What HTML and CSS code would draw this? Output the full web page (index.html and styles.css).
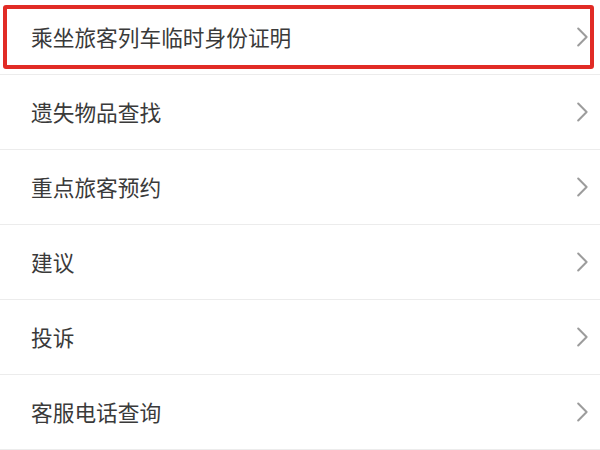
FILE: index.html
```html
<!DOCTYPE html>
<html lang="zh-CN">
<head>
<meta charset="utf-8">
<title>服务列表</title>
<link rel="stylesheet" href="styles.css">
</head>
<body>
<ul class="menu">
  <li class="item item-active"><span class="label">乘坐旅客列车临时身份证明</span><svg class="chev" viewBox="0 0 11 20" width="11" height="20"><path d="M1.2 1.5 L9.6 10 L1.2 18.5" /></svg></li>
  <li class="item"><span class="label">遗失物品查找</span><svg class="chev" viewBox="0 0 11 20" width="11" height="20"><path d="M1.2 1.5 L9.6 10 L1.2 18.5" /></svg></li>
  <li class="item"><span class="label">重点旅客预约</span><svg class="chev" viewBox="0 0 11 20" width="11" height="20"><path d="M1.2 1.5 L9.6 10 L1.2 18.5" /></svg></li>
  <li class="item"><span class="label">建议</span><svg class="chev" viewBox="0 0 11 20" width="11" height="20"><path d="M1.2 1.5 L9.6 10 L1.2 18.5" /></svg></li>
  <li class="item"><span class="label">投诉</span><svg class="chev" viewBox="0 0 11 20" width="11" height="20"><path d="M1.2 1.5 L9.6 10 L1.2 18.5" /></svg></li>
  <li class="item"><span class="label">客服电话查询</span><svg class="chev" viewBox="0 0 11 20" width="11" height="20"><path d="M1.2 1.5 L9.6 10 L1.2 18.5" /></svg></li>
</ul>
</body>
</html>
```
FILE: styles.css
```css
html, body {
  margin: 0;
  padding: 0;
  background: #ffffff;
}
body {
  font-family: "Noto Sans CJK SC", "Noto Sans", sans-serif;
  width: 600px;
  height: 450px;
  overflow: hidden;
}
.menu {
  list-style: none;
  margin: 0;
  padding: 0;
}
.item {
  position: relative;
  height: 74px;
  border-bottom: 1px solid #ececec;
  display: flex;
  align-items: center;
  justify-content: space-between;
  padding: 0 12px 0 31px;
}
.label {
  font-size: 21.7px;
  color: #3a3a3a;
  line-height: 1;
}
.chev {
  display: block;
  flex: none;
}
.chev path {
  fill: none;
  stroke: #9c9c9c;
  stroke-width: 2;
  stroke-linecap: round;
  stroke-linejoin: round;
}
.item-active::after {
  content: "";
  position: absolute;
  top: 5px;
  left: 3px;
  right: 6px;
  bottom: 5px;
  border: 4px solid #e12b25;
  border-radius: 3px;
  pointer-events: none;
}
```
